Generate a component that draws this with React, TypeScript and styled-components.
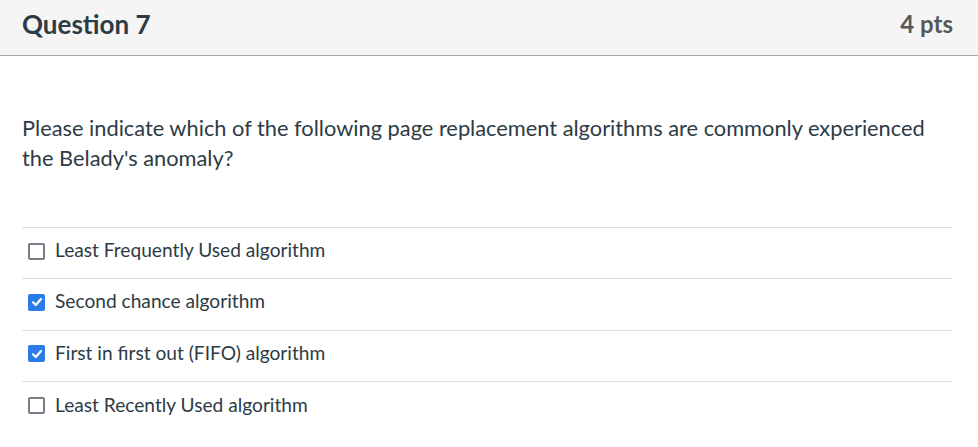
import React from "react";
import styled, { createGlobalStyle } from "styled-components";

const GlobalStyle = createGlobalStyle`
  body {
    margin: 0;
    background: #fff;
    font-family: Lato, "Liberation Sans", sans-serif;
    color: #2d3b45;
  }
`;

const Card = styled.div`
  width: 978px;
`;

const Header = styled.div`
  display: flex;
  justify-content: space-between;
  align-items: center;
  height: 56px;
  box-sizing: border-box;
  padding: 0 25px 0 22px;
  background: #f5f5f5;
  border-bottom: 1px solid #a8a8a8;
`;

const Title = styled.h2`
  margin: 0 0 8px;
  font-size: 26px;
  font-weight: 700;
  color: #2d3b45;
`;

const Points = styled.span`
  margin-bottom: 8px;
  font-size: 24px;
  font-weight: 700;
  color: #585858;
`;

const Body = styled.div`
  padding: 57px 26px 0 22px;
`;

const QuestionText = styled.p`
  margin: 0 0 54px;
  font-size: 21.8px;
  line-height: 30px;
  color: #2d3b45;
`;

const Answers = styled.div`
  border-top: 1px solid #dcdcdc;
`;

const Row = styled.label`
  display: flex;
  align-items: center;
  gap: 10px;
  height: 51.3px;
  box-sizing: border-box;
  padding: 0 0 7px 6px;
  border-bottom: 1px solid #dcdcdc;
  font-size: 19.15px;
  color: #2d3b45;
  &:last-child {
    border-bottom: none;
  }
`;

const Box = styled.span<{ $checked: boolean }>`
  display: flex;
  align-items: center;
  justify-content: center;
  flex-shrink: 0;
  box-sizing: border-box;
  width: 17px;
  height: 17px;
  border-radius: 2px;
  border: ${(p) => (p.$checked ? "none" : "2px solid #7b7b85")};
  background: ${(p) => (p.$checked ? "#2b7ce9" : "#fff")};
  margin-top: 3px;
`;

const answers = [
  { text: "Least Frequently Used algorithm", checked: false },
  { text: "Second chance algorithm", checked: true },
  { text: "First in first out (FIFO) algorithm", checked: true },
  { text: "Least Recently Used algorithm", checked: false },
];

const Check = () => (
  <svg width="12" height="12" viewBox="0 0 12 12">
    <path d="M2 6.3 L4.8 9 L10 3" fill="none" stroke="#fff" strokeWidth="2.2" strokeLinecap="round" strokeLinejoin="round" />
  </svg>
);

export default function App() {
  return (
    <Card>
      <GlobalStyle />
      <Header>
        <Title>Question 7</Title>
        <Points>4 pts</Points>
      </Header>
      <Body>
        <QuestionText>
          Please indicate which of the following page replacement algorithms are commonly experienced
          the Belady's anomaly?
        </QuestionText>
        <Answers>
          {answers.map((a) => (
            <Row key={a.text}>
              <Box $checked={a.checked}>{a.checked && <Check />}</Box>
              {a.text}
            </Row>
          ))}
        </Answers>
      </Body>
    </Card>
  );
}
